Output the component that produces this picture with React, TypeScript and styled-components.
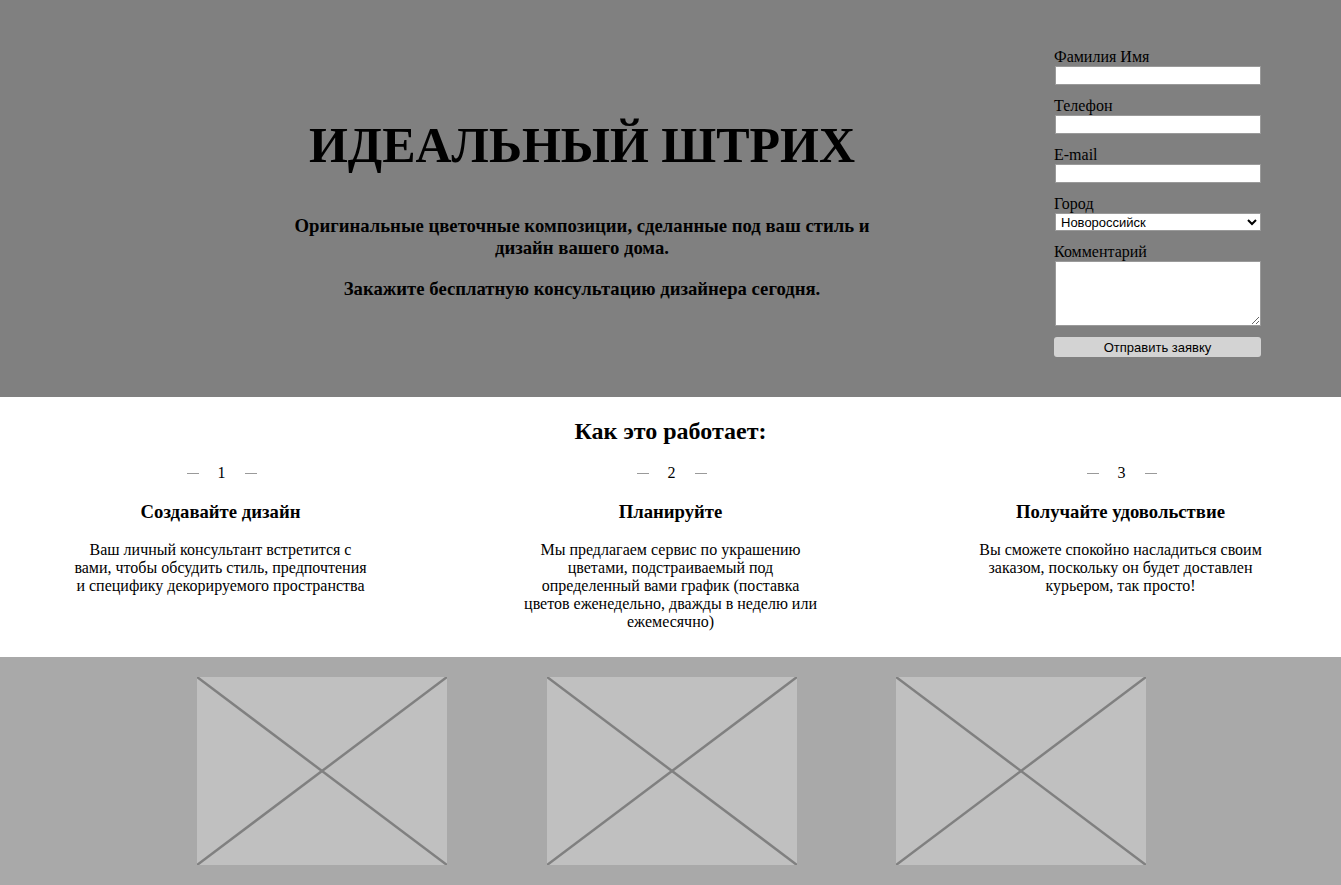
import React from 'react';
import styled, { createGlobalStyle } from 'styled-components';

const GlobalStyle = createGlobalStyle`
  html, body { margin: 0; padding: 0; }
  body {
    font-family: "Liberation Serif", "Times New Roman", serif;
    color: #000;
    background: #fff;
  }
`;

const Hero = styled.section`
  background: #808080;
  height: 397px;
  box-sizing: border-box;
  display: flex;
  align-items: flex-start;
  padding: 47px 80px 0 282px;
`;

const Intro = styled.div`
  width: 600px;
  text-align: center;
  padding-top: 71px;
`;

const Title = styled.h1`
  margin: 0 0 42px;
  font-size: 50px;
  line-height: 55px;
  font-weight: bold;
`;

const Lead = styled.p`
  margin: 0 0 19px;
  font-size: 18.72px;
  line-height: 22px;
  font-weight: bold;
`;

const Form = styled.form`
  margin-left: auto;
  width: 207px;
  display: flex;
  flex-direction: column;
`;

const Field = styled.div`
  display: flex;
  flex-direction: column;
  align-items: flex-start;
  margin-bottom: 11px;
`;

const Label = styled.label`
  font-size: 16px;
  line-height: 19px;
`;

const TextInput = styled.input`
  box-sizing: border-box;
  width: 206px;
  height: 19px;
  margin: 0 0 0 1px;
  border: 1px solid #9a9a9a;
  background: #fff;
  padding: 0 2px;
  font-family: "Liberation Sans", Arial, sans-serif;
  font-size: 13px;
`;

const Select = styled.select`
  box-sizing: border-box;
  width: 206px;
  height: 18px;
  margin: 0 0 0 1px;
  border: 1px solid #9a9a9a;
  background: #fff;
  padding: 0 0 0 1px;
  font-family: "Liberation Sans", Arial, sans-serif;
  font-size: 13px;
  color: #000;
  border-radius: 0;
`;

const TextArea = styled.textarea`
  box-sizing: border-box;
  width: 206px;
  height: 65px;
  margin: 0 0 0 1px;
  border: 1px solid #9a9a9a;
  background: #fff;
  padding: 2px;
  resize: both;
`;

const Submit = styled.button`
  width: 207px;
  height: 20px;
  border: none;
  border-radius: 3px;
  background: #d3d3d3;
  font-family: "Liberation Sans", Arial, sans-serif;
  font-size: 13px;
  color: #000;
  padding: 0;
  cursor: pointer;
`;

const HowItWorks = styled.section`
  background: #fff;
  padding: 20px 0 26px;
  text-align: center;
`;

const SectionTitle = styled.h2`
  margin: 0 0 19px;
  font-size: 24px;
  line-height: 28px;
  font-weight: bold;
`;

const Steps = styled.div`
  display: grid;
  grid-template-columns: repeat(3, 300px);
  column-gap: 150px;
  justify-content: center;
`;

const Step = styled.div`
  display: flex;
  flex-direction: column;
  align-items: center;
`;

const StepNumber = styled.div`
  display: flex;
  align-items: center;
  justify-content: center;
  font-size: 16px;
  line-height: 18px;
  padding-left: 2px;
  &::before, &::after {
    content: "";
    width: 12px;
    height: 1px;
    background: #9a9a9a;
    margin: 0 19px;
  }
`;

const StepTitle = styled.h3`
  margin: 19px 0 0;
  font-size: 18.72px;
  line-height: 21px;
  font-weight: bold;
`;

const StepText = styled.p`
  margin: 19px 0 0;
  font-size: 16px;
  line-height: 18px;
`;

const Gallery = styled.section`
  background: #a9a9a9;
  padding: 20px 0 20px 2px;
  display: flex;
  justify-content: center;
  gap: 99.5px;
`;

const Placeholder = styled.svg`
  display: block;
  width: 250px;
  height: 188px;
`;

const ImagePlaceholder = () => (
  <Placeholder viewBox="0 0 250 188">
    <rect width="250" height="188" fill="#c0c0c0" />
    <line x1="0" y1="0" x2="250" y2="188" stroke="#808080" strokeWidth="2.5" />
    <line x1="250" y1="0" x2="0" y2="188" stroke="#808080" strokeWidth="2.5" />
  </Placeholder>
);

const steps = [
  {
    n: 1,
    title: 'Создавайте дизайн',
    text: 'Ваш личный консультант встретится с вами, чтобы обсудить стиль, предпочтения и специфику декорируемого пространства',
  },
  {
    n: 2,
    title: 'Планируйте',
    text: 'Мы предлагаем сервис по украшению цветами, подстраиваемый под определенный вами график (поставка цветов еженедельно, дважды в неделю или ежемесячно)',
  },
  {
    n: 3,
    title: 'Получайте удовольствие',
    text: 'Вы сможете спокойно насладиться своим заказом, поскольку он будет доставлен курьером, так просто!',
  },
];

export default function App() {
  return (
    <>
      <GlobalStyle />
      <Hero>
        <Intro>
          <Title>ИДЕАЛЬНЫЙ ШТРИХ</Title>
          <Lead>Оригинальные цветочные композиции, сделанные под ваш стиль и дизайн вашего дома.</Lead>
          <Lead>Закажите бесплатную консультацию дизайнера сегодня.</Lead>
        </Intro>
        <Form onSubmit={(e) => e.preventDefault()}>
          <Field>
            <Label htmlFor="name">Фамилия Имя</Label>
            <TextInput id="name" type="text" />
          </Field>
          <Field>
            <Label htmlFor="phone">Телефон</Label>
            <TextInput id="phone" type="tel" />
          </Field>
          <Field>
            <Label htmlFor="email">E-mail</Label>
            <TextInput id="email" type="email" />
          </Field>
          <Field>
            <Label htmlFor="city">Город</Label>
            <Select id="city" defaultValue="Новороссийск">
              <option>Новороссийск</option>
              <option>Краснодар</option>
              <option>Анапа</option>
            </Select>
          </Field>
          <Field>
            <Label htmlFor="comment">Комментарий</Label>
            <TextArea id="comment" />
          </Field>
          <Submit type="submit">Отправить заявку</Submit>
        </Form>
      </Hero>
      <HowItWorks>
        <SectionTitle>Как это работает:</SectionTitle>
        <Steps>
          {steps.map((s) => (
            <Step key={s.n}>
              <StepNumber>{s.n}</StepNumber>
              <StepTitle>{s.title}</StepTitle>
              <StepText>{s.text}</StepText>
            </Step>
          ))}
        </Steps>
      </HowItWorks>
      <Gallery>
        <ImagePlaceholder />
        <ImagePlaceholder />
        <ImagePlaceholder />
      </Gallery>
    </>
  );
}
